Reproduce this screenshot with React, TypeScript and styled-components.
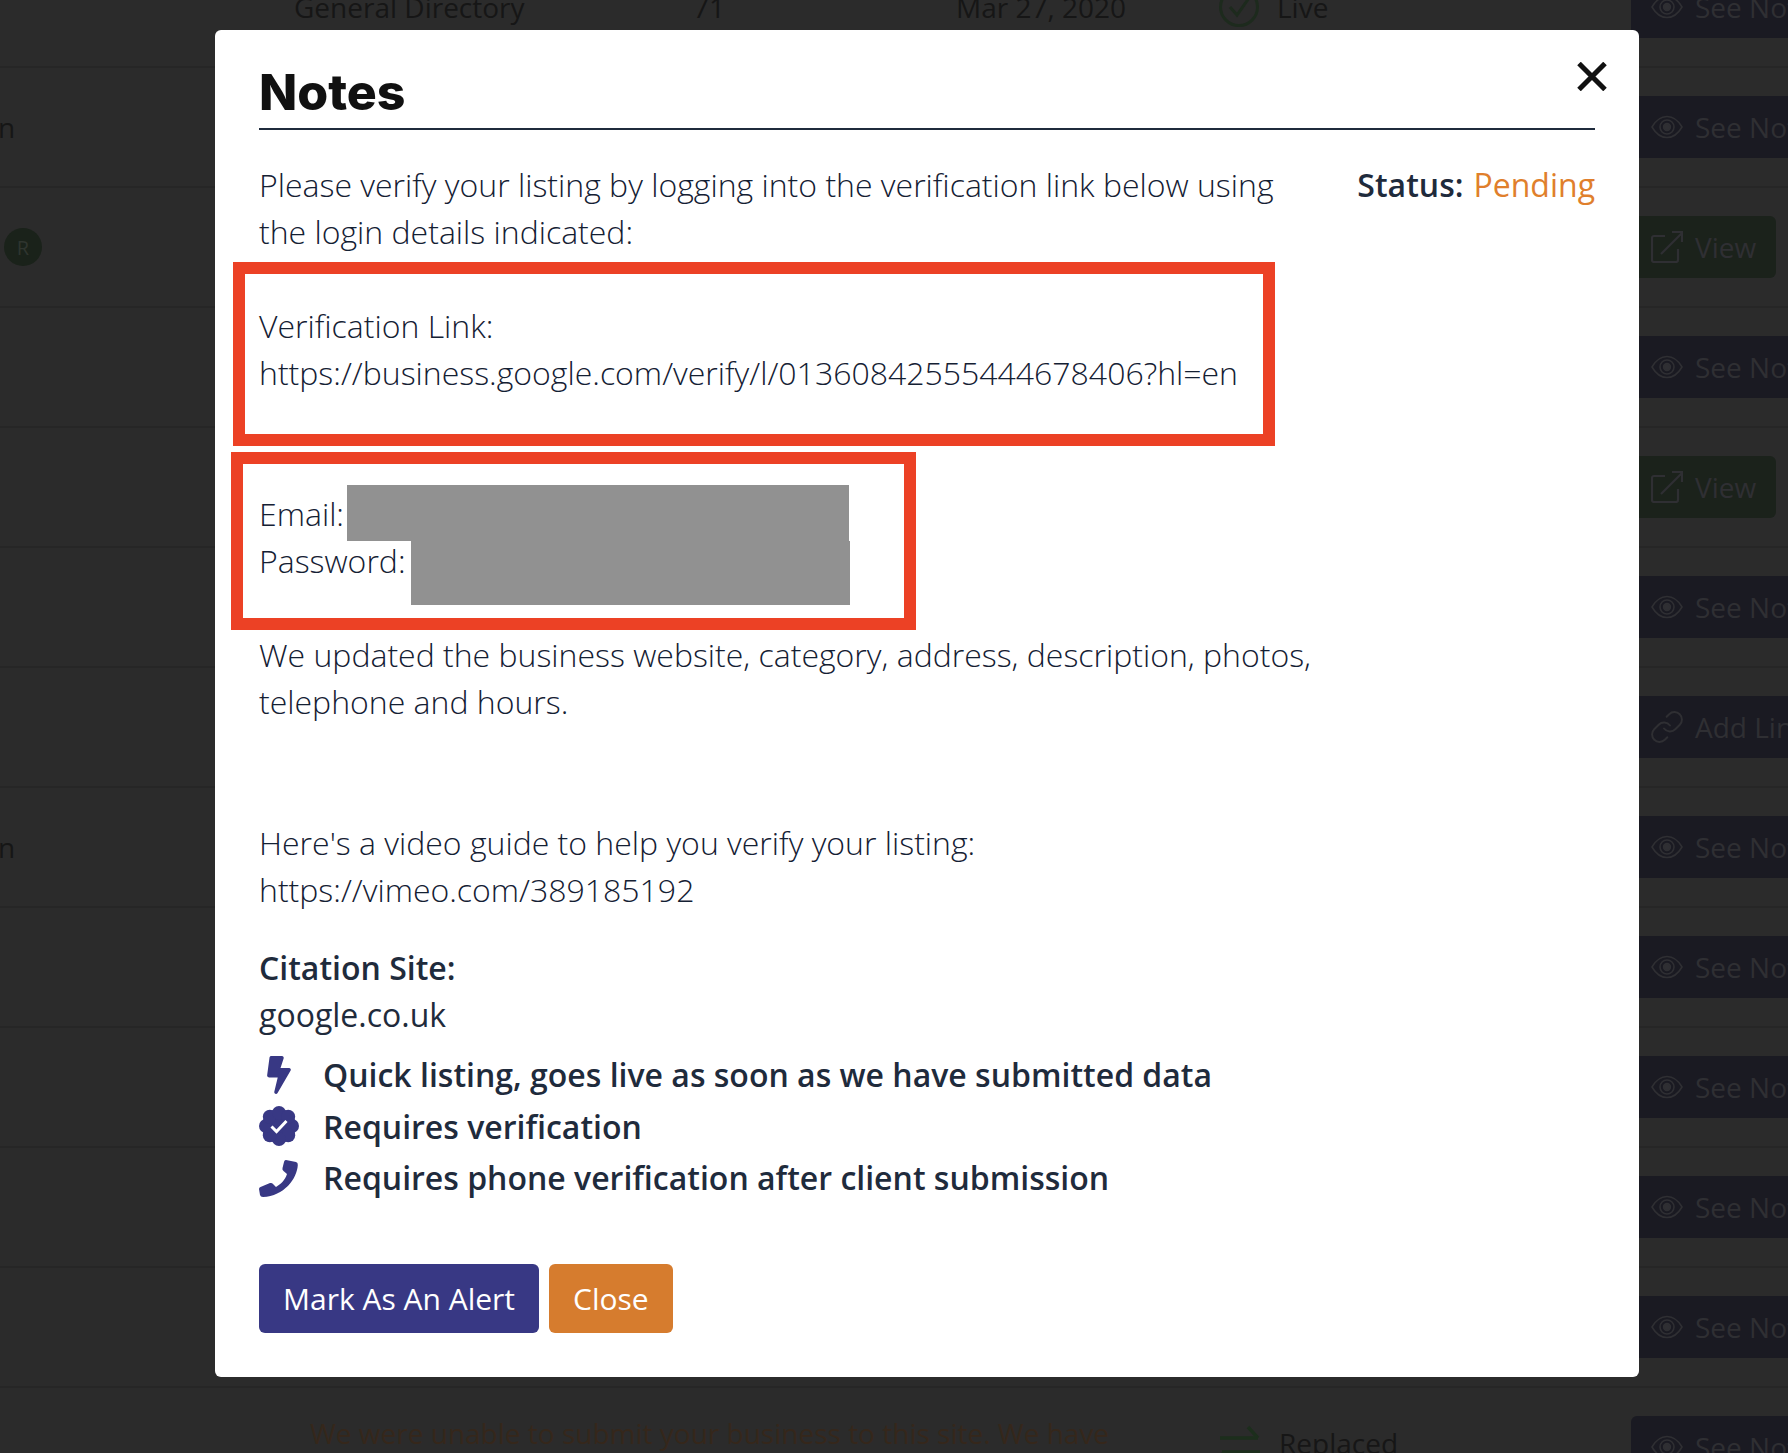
import styled, { createGlobalStyle } from 'styled-components';
import { FaBolt } from 'react-icons/fa';
import { Link as LinkIcon } from 'lucide-react';

const GlobalStyle = createGlobalStyle`
  html, body {
    margin: 0;
    padding: 0;
    background: #2b2b2b;
    font-family: "Open Sans", "Liberation Sans", sans-serif;
  }
`;

const Page = styled.div`
  position: relative;
  width: 1788px;
  height: 1453px;
  overflow: hidden;
  background: #2b2b2b;
`;

const Table = styled.div`
  margin-top: -52px;
`;

const Row = styled.div`
  display: grid;
  grid-template-columns: 294px 399px 263px 287px 388px 157px;
  align-items: center;
  box-sizing: border-box;
  height: 120px;
  border-bottom: 2px solid #262626;
  color: #161616;
  font-size: 28px;
  white-space: nowrap;
`;

const Lead = styled.div`
  margin-left: -2px;
  line-height: 1;
`;

const Avatar = styled.div`
  display: flex;
  align-items: center;
  justify-content: center;
  width: 38px;
  height: 38px;
  margin-left: 4px;
  border-radius: 50%;
  background: #1a221a;
  color: #2f352f;
  font-size: 20px;
`;

const NoteCell = styled.div`
  grid-column: span 3;
  align-self: start;
  margin: 25px 0 0 16px;
  color: #35271b;
  line-height: 40px;
`;

const EmptyCells = styled.div`
  grid-column: span 4;
`;

const StatusCell = styled.div<{ $raised?: boolean }>`
  display: flex;
  align-items: center;
  gap: 18px;
  margin-left: -24px;
  margin-bottom: ${(p) => (p.$raised ? '8px' : '0')};
`;

const ActionButton = styled.div<{ $green?: boolean }>`
  display: flex;
  align-items: center;
  gap: 12px;
  box-sizing: border-box;
  justify-self: start;
  height: 62px;
  padding: 0 20px;
  border-radius: 6px;
  background: ${(p) => (p.$green ? '#1b221b' : '#1a1a22')};
  color: #2f2f33;
  font-size: 28px;
`;

const ChainIcon = styled(LinkIcon)`
  margin: 0 -2px;
`;

const Overlay = styled.div`
  position: absolute;
  top: 30px;
  left: 215px;
  width: 1424px;
  height: 1347px;
`;

const Modal = styled.div`
  position: relative;
  box-sizing: border-box;
  height: 100%;
  padding: 26px 44px 0;
  border-radius: 6px;
  background: #fff;
  color: #1f2b3c;
  font-size: 32px;
  line-height: 47px;
`;

const Title = styled.h2`
  margin: 0;
  height: 72px;
  border-bottom: 2px solid #1f2b3c;
  color: #111;
  font-family: Inter, "Liberation Sans", sans-serif;
  font-size: 50px;
  font-weight: 800;
  line-height: 72px;
`;

const CloseX = styled.svg`
  position: absolute;
  top: 32px;
  right: 32px;
  width: 30px;
  height: 29px;
`;

const Top = styled.div`
  display: flex;
  justify-content: space-between;
  padding-top: 30.5px;
`;

const Notes = styled.div`
  width: 1062px;
  color: #142033;
  font-weight: 300;
`;

const Para = styled.p<{ $gap?: number }>`
  margin: 0 0 ${(p) => p.$gap ?? 0}px;
`;

const Status = styled.div`
  font-weight: 600;
  white-space: nowrap;
`;

const Pending = styled.span`
  margin-left: 10px;
  color: #e07f2c;
  font-weight: 400;
`;

const Marked = styled.div`
  position: relative;
`;

const RedFrame = styled.div<{ $left: number; $top: number; $width: number; $height: number }>`
  position: absolute;
  box-sizing: border-box;
  left: ${(p) => p.$left}px;
  top: ${(p) => p.$top}px;
  width: ${(p) => p.$width}px;
  height: ${(p) => p.$height}px;
  border: 12.5px solid #ec4125;
`;

const Redaction = styled.div<{ $left: number; $top: number; $width: number; $height: number }>`
  position: absolute;
  left: ${(p) => p.$left}px;
  top: ${(p) => p.$top}px;
  width: ${(p) => p.$width}px;
  height: ${(p) => p.$height}px;
  background: #919191;
`;

const Site = styled.div`
  margin-top: 31.5px;
`;

const SiteLabel = styled.div`
  font-weight: 600;
`;

const Features = styled.ul`
  list-style: none;
  margin: 11px 0 0;
  padding: 0;
`;

const Feature = styled.li`
  display: flex;
  align-items: center;
  height: 51.5px;
  font-weight: 600;
`;

const FeatureIcon = styled.span`
  display: flex;
  justify-content: center;
  flex: 0 0 64px;
  width: 64px;
  padding-right: 24px;
  box-sizing: border-box;
  color: #383884;
`;

const Buttons = styled.div`
  display: flex;
  gap: 10px;
  margin-top: 60px;
`;

const Button = styled.button<{ $orange?: boolean }>`
  height: 69px;
  padding: 0 24px;
  border: none;
  border-radius: 6px;
  background: ${(p) => (p.$orange ? '#d67c2e' : '#383884')};
  color: #fff;
  font-family: inherit;
  font-size: 30px;
`;

const Eye = () => (
  <svg width="32" height="24" viewBox="0 0 32 24" fill="none" stroke="currentColor" strokeWidth="1.6">
    <path d="M1 12C5 5 10 1.500 16 1.500S27 5 31 12C27 19 22 22.500 16 22.500S5 19 1 12Z" />
    <circle cx="16" cy="12" r="7" />
    <circle cx="16" cy="12" r="3.400" fill="currentColor" />
  </svg>
);

const External = () => (
  <svg width="32" height="32" viewBox="0 0 32 32" fill="none" stroke="currentColor" strokeWidth="2.2">
    <path d="M14 5H3a2 2 0 0 0-2 2v22a2 2 0 0 0 2 2h22a2 2 0 0 0 2-2V18" />
    <path d="M10 23L31 2M21 1h10v10" />
  </svg>
);

const CheckCircle = () => (
  <svg width="40" height="40" viewBox="0 0 40 40" fill="none" stroke="#1d2a1d" strokeWidth="3">
    <circle cx="20" cy="20" r="18.500" />
    <path d="M11 20l7 8 12-17" />
  </svg>
);

const Swap = () => (
  <svg width="42" height="36" viewBox="0 0 42 36" fill="none" stroke="#1c2e1c" strokeWidth="3.400">
    <path d="M1 13h38M29 2l10 11M41 27H3M13 36L3 27" />
  </svg>
);

const Badge = () => (
  <svg width="40" height="40" viewBox="0 0 40 40">
    <circle cx="20" cy="20" r="17" fill="currentColor" />
    {[0, 45, 90, 135, 180, 225, 270, 315].map((a) => (
      <circle
        key={a}
        cx={20 + 13 * Math.cos((a * Math.PI) / 180)}
        cy={20 + 13 * Math.sin((a * Math.PI) / 180)}
        r="7"
        fill="currentColor"
      />
    ))}
    <path d="M12.500 20.500l5 5 10-10.500" fill="none" stroke="#fff" strokeWidth="3" />
  </svg>
);

const Phone = () => (
  <svg width="40" height="38" viewBox="0 0 40 38" fill="currentColor">
    <path d="M27 1L37 3Q39 3.500 38.800 6C38 20 25 37 4 38Q1.500 38 1 36L0 30Q0 28.500 1.500 28L11 24Q13 23.500 14 25L17 28C22 25 26 21 28 15L24.500 12Q23 11 23.500 9L25 3Q25.500 .8 27 1Z" />
  </svg>
);

type Action = 'notes' | 'view' | 'link';

const actions: Action[] = [
  'notes', 'notes', 'view', 'notes', 'view', 'notes', 'link',
  'notes', 'notes', 'notes', 'notes', 'notes', 'notes',
];

const RowAction = ({ kind }: { kind: Action }) => {
  if (kind === 'view') {
    return (
      <ActionButton $green>
        <External />
        View
      </ActionButton>
    );
  }
  if (kind === 'link') {
    return (
      <ActionButton>
        <ChainIcon size={36} strokeWidth={1.3} />
        Add Link
      </ActionButton>
    );
  }
  return (
    <ActionButton>
      <Eye />
      See Notes
    </ActionButton>
  );
};

const leadFor = (i: number) => {
  if (i === 1 || i === 7) return <Lead>n</Lead>;
  if (i === 2) return <Avatar>R</Avatar>;
  return <Lead />;
};

export default function App() {
  return (
    <Page>
      <GlobalStyle />
      <Table>
        {actions.map((kind, i) => (
          <Row key={i}>
            {leadFor(i)}
            {i === 0 && <div>General Directory</div>}
            {i === 0 && <div>71</div>}
            {i === 0 && <div>Mar 27, 2020</div>}
            {i === 0 && (
              <StatusCell>
                <CheckCircle />
                Live
              </StatusCell>
            )}
            {i === 12 && <NoteCell>We were unable to submit your business to this site. We have</NoteCell>}
            {i === 12 && (
              <StatusCell $raised>
                <Swap />
                Replaced
              </StatusCell>
            )}
            {i !== 0 && i !== 12 && <EmptyCells />}
            <RowAction kind={kind} />
          </Row>
        ))}
      </Table>
      <Overlay>
        <Modal>
          <Title>Notes</Title>
          <CloseX viewBox="0 0 30 29" fill="none" stroke="#111" strokeWidth="5">
            <path d="M2 1.500L28 27.500M28 1.500L2 27.500" />
          </CloseX>
          <Top>
            <Notes>
              <Para>Please verify your listing by logging into the verification link below using the login details indicated:</Para>
              <Marked>
                <RedFrame $left={-26} $top={7.5} $width={1042} $height={184} />
                <Para $gap={47}>
                  <br />
                  Verification Link:
                  <br />
                  https://business.google.com/verify/l/01360842555444678406?hl=en
                </Para>
              </Marked>
              <Marked>
                <RedFrame $left={-28} $top={9.5} $width={685} $height={178} />
                <Redaction $left={88} $top={42.5} $width={502} $height={56} />
                <Redaction $left={152} $top={98.5} $width={439} $height={64} />
                <Para $gap={47}>
                  <br />
                  Email:
                  <br />
                  Password:
                </Para>
              </Marked>
              <Para>We updated the business website, category, address, description, photos, telephone and hours.</Para>
              <Para>
                <br />
                <br />
                Here's a video guide to help you verify your listing:
                <br />
                https://vimeo.com/389185192
              </Para>
            </Notes>
            <Status>
              Status:<Pending>Pending</Pending>
            </Status>
          </Top>
          <Site>
            <SiteLabel>Citation Site:</SiteLabel>
            <div>google.co.uk</div>
          </Site>
          <Features>
            <Feature>
              <FeatureIcon><FaBolt size={38} /></FeatureIcon>
              Quick listing, goes live as soon as we have submitted data
            </Feature>
            <Feature>
              <FeatureIcon><Badge /></FeatureIcon>
              Requires verification
            </Feature>
            <Feature>
              <FeatureIcon><Phone /></FeatureIcon>
              Requires phone verification after client submission
            </Feature>
          </Features>
          <Buttons>
            <Button>Mark As An Alert</Button>
            <Button $orange>Close</Button>
          </Buttons>
        </Modal>
      </Overlay>
    </Page>
  );
}
